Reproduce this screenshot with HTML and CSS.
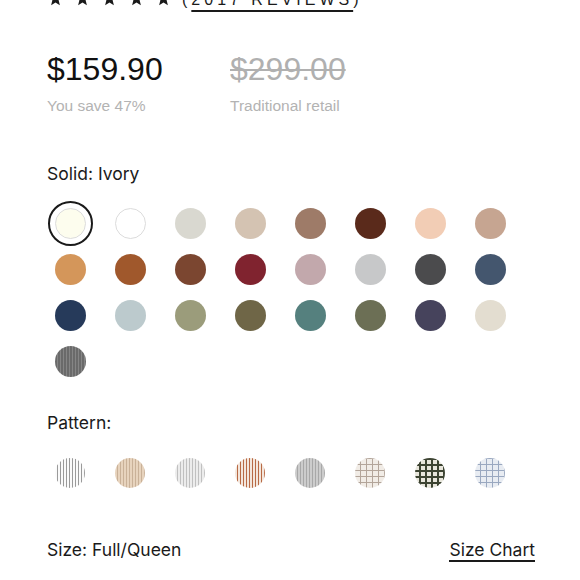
FILE: index.html
```html
<!DOCTYPE html>
<html>
<head>
<meta charset="utf-8">
<link rel="stylesheet" href="styles.css">
</head>
<body>
<div class="page">
  <div class="rating">
    <div class="stars">
      <svg viewBox="0 0 24 24" class="star"><polygon points="12,1 15.1,8.6 23.4,9.3 17,14.6 19,22.6 12,18.3 5,22.6 7,14.6 0.6,9.3 8.9,8.6"/></svg>
      <svg viewBox="0 0 24 24" class="star"><polygon points="12,1 15.1,8.6 23.4,9.3 17,14.6 19,22.6 12,18.3 5,22.6 7,14.6 0.6,9.3 8.9,8.6"/></svg>
      <svg viewBox="0 0 24 24" class="star"><polygon points="12,1 15.1,8.6 23.4,9.3 17,14.6 19,22.6 12,18.3 5,22.6 7,14.6 0.6,9.3 8.9,8.6"/></svg>
      <svg viewBox="0 0 24 24" class="star"><polygon points="12,1 15.1,8.6 23.4,9.3 17,14.6 19,22.6 12,18.3 5,22.6 7,14.6 0.6,9.3 8.9,8.6"/></svg>
      <svg viewBox="0 0 24 24" class="star"><polygon points="12,1 15.1,8.6 23.4,9.3 17,14.6 19,22.6 12,18.3 5,22.6 7,14.6 0.6,9.3 8.9,8.6"/></svg>
    </div>
    <span class="reviews">(<span class="reviews-link">2017 REVIEWS</span>)</span>
  </div>

  <div class="prices">
    <div class="price-col">
      <div class="price">$159.90</div>
      <div class="price-note">You save 47%</div>
    </div>
    <div class="price-col">
      <div class="price old">$299.00</div>
      <div class="price-note">Traditional retail</div>
    </div>
  </div>

  <div class="label solid-label">Solid: Ivory</div>
  <div class="swatches">
    <div class="cell"><div class="ring"><div class="dot bordered" style="background:#fdfdee"></div></div></div>
    <div class="cell"><div class="dot bordered" style="background:#ffffff"></div></div>
    <div class="cell"><div class="dot" style="background:#d9d8d0"></div></div>
    <div class="cell"><div class="dot" style="background:#d4c3b2"></div></div>
    <div class="cell"><div class="dot" style="background:#9e7b68"></div></div>
    <div class="cell"><div class="dot" style="background:#5a2a1b"></div></div>
    <div class="cell"><div class="dot" style="background:#f2cdb5"></div></div>
    <div class="cell"><div class="dot" style="background:#c6a591"></div></div>

    <div class="cell"><div class="dot" style="background:#d4965a"></div></div>
    <div class="cell"><div class="dot" style="background:#a0582c"></div></div>
    <div class="cell"><div class="dot" style="background:#7b4630"></div></div>
    <div class="cell"><div class="dot" style="background:#80232f"></div></div>
    <div class="cell"><div class="dot" style="background:#c2a8ac"></div></div>
    <div class="cell"><div class="dot" style="background:#c7c8c9"></div></div>
    <div class="cell"><div class="dot" style="background:#4b4b4d"></div></div>
    <div class="cell"><div class="dot" style="background:#44566e"></div></div>

    <div class="cell"><div class="dot" style="background:#263a5a"></div></div>
    <div class="cell"><div class="dot" style="background:#bccacd"></div></div>
    <div class="cell"><div class="dot" style="background:#9b9c7b"></div></div>
    <div class="cell"><div class="dot" style="background:#6f6647"></div></div>
    <div class="cell"><div class="dot" style="background:#55807e"></div></div>
    <div class="cell"><div class="dot" style="background:#6c6f55"></div></div>
    <div class="cell"><div class="dot" style="background:#46435c"></div></div>
    <div class="cell"><div class="dot" style="background:#e3ddd0"></div></div>

    <div class="cell"><div class="dot stripe-gray"></div></div>
  </div>

  <div class="label pattern-label">Pattern:</div>
  <div class="swatches patterns">
    <div class="cell"><div class="dot pat p1"></div></div>
    <div class="cell"><div class="dot pat p2"></div></div>
    <div class="cell"><div class="dot pat p3"></div></div>
    <div class="cell"><div class="dot pat p4"></div></div>
    <div class="cell"><div class="dot pat p5"></div></div>
    <div class="cell"><div class="dot pat c1"></div></div>
    <div class="cell"><div class="dot pat c2"></div></div>
    <div class="cell"><div class="dot pat c3"></div></div>
  </div>

  <div class="size-row">
    <div class="label size-label">Size: Full/Queen</div>
    <a class="size-chart">Size Chart</a>
  </div>
</div>
</body>
</html>
```

FILE: styles.css
```css
html, body {
  margin: 0;
  padding: 0;
  background: #ffffff;
}

.page {
  padding: 0 45px 0 47px;
  font-family: "Liberation Sans", Arial, sans-serif;
  color: #1a1a1a;
  overflow: hidden;
}

.rating {
  display: flex;
  align-items: flex-end;
  height: 20px;
  margin-top: -10px;
}

.stars {
  display: flex;
  gap: 12px;
  margin-bottom: 4px;
  margin-left: 1px;
}

.star {
  width: 15px;
  height: 15px;
  fill: #1a1a1a;
  display: block;
}

.reviews {
  margin-left: 11px;
  font-size: 16px;
  letter-spacing: 4px;
  line-height: 16px;
  color: #1a1a1a;
  margin-bottom: 2px;
}

.reviews-link {
  text-decoration: underline;
  text-underline-offset: 5px;
  text-decoration-thickness: 2px;
}

.prices {
  display: flex;
  margin-top: 41px;
}

.price-col {
  display: flex;
  flex-direction: column;
}

.price-col:first-child {
  width: 183px;
}

.price {
  font-size: 32px;
  line-height: 36px;
  color: #111;
}

.price.old {
  color: #b0b0b0;
  text-decoration: line-through;
  text-decoration-thickness: 2px;
}

.price-note {
  margin-top: 10px;
  font-size: 15.5px;
  line-height: 18px;
  color: #b3b3b3;
}

.label {
  font-family: Inter, "Liberation Sans", sans-serif;
  font-size: 17.5px;
  line-height: 20px;
  color: #1a1a1a;
}

.solid-label {
  margin-top: 49px;
}

.swatches {
  display: grid;
  grid-template-columns: repeat(8, 60px);
  grid-auto-rows: 46px;
  margin-left: -7px;
  margin-top: 16px;
}

.cell {
  display: flex;
  align-items: center;
  justify-content: center;
}

.dot {
  width: 31px;
  height: 31px;
  border-radius: 50%;
  box-sizing: border-box;
}

.dot.bordered {
  border: 1px solid #dcdcdc;
}

.ring {
  width: 45px;
  height: 45px;
  border-radius: 50%;
  border: 2px solid #1a1a1a;
  box-sizing: border-box;
  display: flex;
  align-items: center;
  justify-content: center;
}

.stripe-gray {
  background: repeating-linear-gradient(90deg, #6a6a6a 0 2px, #858585 2px 3px);
}

.pattern-label {
  margin-top: 29px;
}

.patterns {
  margin-top: 17px;
}

.pat {
  width: 30px;
  height: 30px;
}

.p1 {
  background: repeating-linear-gradient(90deg, #fafafa 0 2px, #9a9a9a 2px 3px);
}

.p2 {
  background: repeating-linear-gradient(90deg, #e7d3bd 0 2px, #c9b198 2px 3px);
}

.p3 {
  background: repeating-linear-gradient(90deg, #ececec 0 2px, #c0c0c0 2px 3px);
}

.p4 {
  background: repeating-linear-gradient(90deg, #f3e6dc 0 2px, #b86a45 2px 3px);
}

.p5 {
  background: repeating-linear-gradient(90deg, #cccccc 0 2px, #a8a8a8 2px 3px);
}

.c1 {
  background-color: #f1ece6;
  background-image:
    repeating-linear-gradient(90deg, transparent 0 5px, #b3a59a 5px 6px),
    repeating-linear-gradient(0deg, transparent 0 5px, #b3a59a 5px 6px);
}

.c2 {
  background-color: #e8e6dc;
  background-image:
    repeating-linear-gradient(90deg, transparent 0 4px, #3d4432 4px 6px),
    repeating-linear-gradient(0deg, transparent 0 4px, #3d4432 4px 6px);
}

.c3 {
  background-color: #e8ecf2;
  background-image:
    repeating-linear-gradient(90deg, transparent 0 5px, #9aa8c0 5px 6px),
    repeating-linear-gradient(0deg, transparent 0 5px, #9aa8c0 5px 6px);
}

.size-row {
  display: flex;
  justify-content: space-between;
  align-items: baseline;
  margin-top: 44px;
}

.size-chart {
  display: inline-block;
  font-family: Inter, "Liberation Sans", sans-serif;
  font-size: 17.5px;
  line-height: 20px;
  color: #1a1a1a;
  border-bottom: 2px solid #1a1a1a;
  cursor: pointer;
}
```
